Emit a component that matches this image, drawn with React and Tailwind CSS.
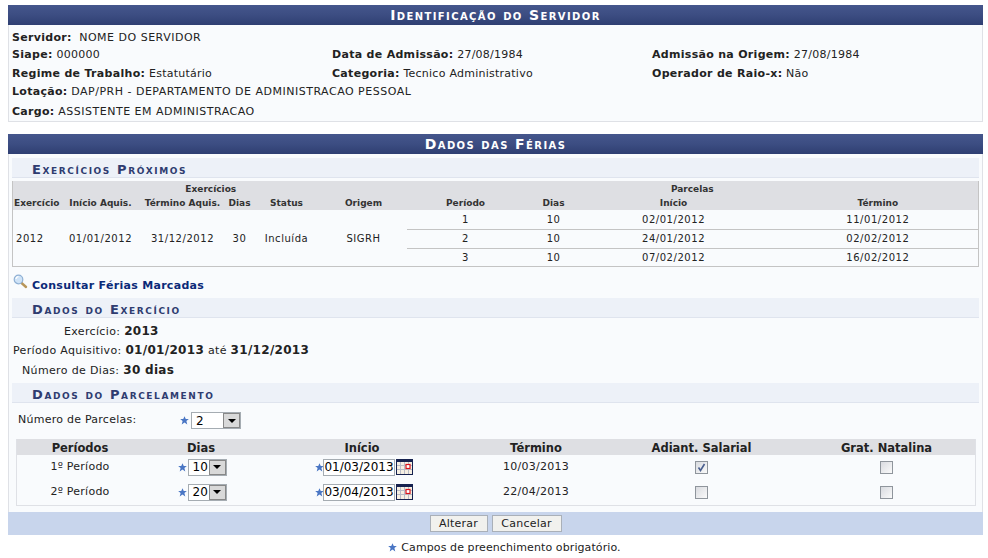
// App.jsx - Dados das Férias
import React from "react";

const exercicios = [
  { periodo: 1, dias: 10, inicio: "02/01/2012", termino: "11/01/2012" },
  { periodo: 2, dias: 10, inicio: "24/01/2012", termino: "02/02/2012" },
  { periodo: 3, dias: 10, inicio: "07/02/2012", termino: "16/02/2012" },
];

const Star = ({ className = "" }) => (
  <svg className={`w-[9px] h-[9px] shrink-0 ${className}`} viewBox="0 0 10 10">
    <path d="M5 0.3l1.4 3H9.8L7.1 5.5l1 3.9L5 7.3 1.9 9.4l1-3.9L0.2 3.3h3.4z" fill="#4a76c4" />
  </svg>
);

const Lens = () => (
  <svg className="w-[15px] h-[15px]" viewBox="0 0 15 15">
    <path d="M8 8.5l5 4.5" stroke="#b8965a" strokeWidth="2.4" strokeLinecap="round" />
    <circle cx="5.5" cy="5.5" r="4.3" fill="#cfe3f7" stroke="#8fb0d4" strokeWidth="1.2" />
    <path d="M3 5a2.5 2.5 0 0 1 2.5-2.3" stroke="#fff" strokeWidth="1.2" fill="none" />
  </svg>
);

const Calendar = () => (
  <svg className="w-[17px] h-[16px] shrink-0" viewBox="0 0 17 16">
    <rect x="0" y="0" width="17" height="16" fill="#16224f" />
    <rect x="1" y="3" width="15" height="12" fill="#f6efe2" />
    <path d="M4.5 3v12M8.5 3v12M12.5 3v12M1 6.5h15M1 10.5h15" stroke="#b9bcc6" strokeWidth="1" />
    <rect x="10" y="5.5" width="4" height="4" fill="#fff" stroke="#d8141c" strokeWidth="1.2" />
  </svg>
);

const Check = ({ checked }) => (
  <div className="w-[13px] h-[13px] border border-[#8f959c] bg-gradient-to-br from-[#d9dbe0] to-[#fafafa] flex items-center justify-center">
    {checked && (
      <svg className="w-[9px] h-[9px]" viewBox="0 0 9 9">
        <path d="M1.5 4.5l2 3 4-6.5" stroke="#4a5f8f" strokeWidth="1.6" fill="none" />
      </svg>
    )}
  </div>
);

const Select = ({ value, width }) => (
  <div className={`h-[17px] bg-white border border-[#a5acb2] flex items-center justify-between ${width}`}>
    <span className="pl-1 text-[12px] text-black leading-none tracking-normal">{value}</span>
    <span className="w-[17px] h-[15px] bg-[#d9d9d9] border border-[#888] flex items-center justify-center">
      <span className="w-0 h-0 border-l-[4px] border-r-[4px] border-t-[4px] border-l-transparent border-r-transparent border-t-black" />
    </span>
  </div>
);

const DateField = ({ value }) => (
  <div className="flex items-center justify-center pl-[4px]">
    <Star className="-mr-px" />
    <span className="w-[72px] h-[17px] bg-white border border-[#a5acb2] text-[12px] leading-[15px] text-center text-black tracking-normal">
      {value}
    </span>
    <span className="ml-[1px]">
      <Calendar />
    </span>
  </div>
);

const Bar = ({ children }) => (
  <div className="h-5 bg-gradient-to-b from-[#45568c] via-[#3c4d82] to-[#2f3f72] text-white text-center font-bold text-[14px] leading-5 tracking-[1.4px] [font-variant:small-caps]">
    {children}
  </div>
);

const Section = ({ children }) => (
  <div className="h-5 bg-[#edf1f8] border-b border-[#dfe4ee] pl-5 text-[#2f3c70] font-bold text-[13px] leading-[23px] tracking-[1.6px] [font-variant:small-caps]">
    {children}
  </div>
);

const Label = ({ children }) => <span className="font-bold text-[#222] tracking-[0.3px]">{children}</span>;

const Upper = ({ children }) => <span className="tracking-[0.5px]">{children}</span>;

const Strong = ({ children }) => <b className="text-[12px] tracking-[0.3px]">{children}</b>;

export default function App() {
  return (
    <div className="w-[988px] h-[558px] bg-white pt-[5px] px-2 overflow-hidden text-[11px] tracking-[0.25px] text-[#222] font-['DejaVu_Sans','Verdana',sans-serif]">
      <div className="w-[975px]">
        <Bar>Identificação do Servidor</Bar>
        <div className="h-[97px] bg-[#f9fbfd] border-x border-b border-[#dfe1e6] pl-[3px] pt-1 leading-[18.4px]">
          <div className="h-[17px]">
            <Label>Servidor:</Label> &nbsp;<Upper>NOME DO SERVIDOR</Upper>
          </div>
          <div className="grid grid-cols-[320px_320px_1fr] auto-rows-[19px]">
            <div><Label>Siape:</Label> 000000</div>
            <div><Label>Data de Admissão:</Label> 27/08/1984</div>
            <div><Label>Admissão na Origem:</Label> 27/08/1984</div>
            <div><Label>Regime de Trabalho:</Label> Estatutário</div>
            <div><Label>Categoria:</Label> Tecnico Administrativo</div>
            <div><Label>Operador de Raio-x:</Label> Não</div>
          </div>
          <div className="-mt-px"><Label>Lotação:</Label> <Upper>DAP/PRH - DEPARTAMENTO DE ADMINISTRACAO PESSOAL</Upper></div>
          <div className="mt-[2px]"><Label>Cargo:</Label> <Upper>ASSISTENTE EM ADMINISTRACAO</Upper></div>
        </div>

        <div className="mt-3">
          <Bar>Dados das Férias</Bar>
          <div className="h-[358px] bg-[#f9fbfd] border-x border-[#dfe1e6] px-[3px] pt-[4px]">
            <Section>Exercícios Próximos</Section>
            <table className="w-[966px] table-fixed border-collapse border-b border-x border-[#c4c4c4] mt-[3px] text-[10px]">
              <colgroup>
                <col className="w-[50px]" />
                <col className="w-[76px]" />
                <col className="w-[88px]" />
                <col className="w-[26px]" />
                <col className="w-[68px]" />
                <col className="w-[86px]" />
                <col className="w-[118px]" />
                <col className="w-[58px]" />
                <col className="w-[182px]" />
                <col className="w-[214px]" />
              </colgroup>
              <thead className="bg-[#dedfe3] text-[9px] leading-[14px] whitespace-nowrap tracking-normal text-[#333]">
                <tr className="h-[15px]">
                  <th colSpan={6} className="text-center font-bold pl-[2px] pt-px">Exercícios</th>
                  <th colSpan={4} className="text-center font-bold pt-px">Parcelas</th>
                </tr>
                <tr className="h-[14px]">
                  <th className="font-bold pr-[2px]">Exercício</th>
                  <th className="font-bold">Início Aquis.</th>
                  <th className="font-bold">Término Aquis.</th>
                  <th className="font-bold">Dias</th>
                  <th className="font-bold">Status</th>
                  <th className="font-bold">Origem</th>
                  <th className="font-bold">Período</th>
                  <th className="font-bold">Dias</th>
                  <th className="font-bold">Início</th>
                  <th className="font-bold pl-[13px]">Término</th>
                </tr>
              </thead>
              <tbody className="text-center text-[#222] tracking-[0.55px]">
                {exercicios.map((row, i) => (
                  <tr key={row.periodo} className={i < 2 ? "h-[19px]" : "h-[18px]"}>
                    {i === 0 && (
                      <>
                        <td rowSpan={3} className="text-left pl-[3px] pt-[2px]">2012</td>
                        <td rowSpan={3} className="pt-[2px]">01/01/2012</td>
                        <td rowSpan={3} className="pt-[2px]">31/12/2012</td>
                        <td rowSpan={3} className="pt-[2px]">30</td>
                        <td rowSpan={3} className="pt-[2px]">Incluída</td>
                        <td rowSpan={3} className="pt-[2px]">SIGRH</td>
                      </>
                    )}
                    <td className={i < 2 ? "border-b border-[#c4c4c4]" : ""}>{row.periodo}</td>
                    <td className={i < 2 ? "border-b border-[#c4c4c4]" : ""}>{row.dias}</td>
                    <td className={i < 2 ? "border-b border-[#c4c4c4]" : ""}>{row.inicio}</td>
                    <td className={`pl-[13px] ${i < 2 ? "border-b border-[#c4c4c4]" : ""}`}>{row.termino}</td>
                  </tr>
                ))}
              </tbody>
            </table>

            <div className="flex items-start h-[31px] pt-[7px] pl-px">
              <Lens />
              <a className="ml-[4px] mt-[5px] text-[#0b2a78] font-bold text-[11px] leading-[14px] tracking-[0.3px]">Consultar Férias Marcadas</a>
            </div>

            <Section>Dados do Exercício</Section>
            <div className="leading-[19.5px] pt-[4px] h-[65px] tracking-[0.35px]">
              <div className="pl-[52px]">Exercício: <Strong>2013</Strong></div>
              <div className="pl-px">
                Período Aquisitivo: <Strong>01/01/2013</Strong> até <Strong>31/12/2013</Strong>
              </div>
              <div className="pl-[10px]">Número de Dias: <Strong>30 dias</Strong></div>
            </div>

            <Section>Dados do Parcelamento</Section>
            <div className="flex items-center h-[26px] mt-[5px] pl-[6px]">
              <span className="w-[162px]">Número de Parcelas:</span>
              <Star />
              <span className="ml-[2px]">
                <Select value="2" width="w-[50px]" />
              </span>
            </div>

            <div className="ml-[4px] mt-[5px] w-[960px] border border-t-0 border-[#dfe1e6]">
              <div className="grid grid-cols-[126px_116px_206px_142px_189px_181px] h-4 bg-[#dedfe3] font-bold text-[11.5px] leading-[18px] text-center text-[#222] tracking-normal">
                <div>Períodos</div>
                <div>Dias</div>
                <div>Início</div>
                <div>Término</div>
                <div>Adiant. Salarial</div>
                <div>Grat. Natalina</div>
              </div>
              {[
                { nome: "1º Período", dias: "10", inicio: "01/03/2013", termino: "10/03/2013", adiant: true },
                { nome: "2º Período", dias: "20", inicio: "03/04/2013", termino: "22/04/2013", adiant: false },
              ].map((p) => (
                <div key={p.nome} className="grid grid-cols-[126px_116px_206px_142px_189px_181px] h-[25px] items-center text-center">
                  <div className="pt-px">{p.nome}</div>
                  <div className="flex items-center justify-center pl-[2px]">
                    <Star />
                    <span className="ml-[1px]">
                      <Select value={p.dias} width="w-[39px]" />
                    </span>
                  </div>
                  <DateField value={p.inicio} />
                  <div className="pt-px">{p.termino}</div>
                  <div className="flex justify-center"><Check checked={p.adiant} /></div>
                  <div className="flex justify-center"><Check checked={false} /></div>
                </div>
              ))}
            </div>
          </div>
        </div>

        <div className="h-[23px] bg-[#c8d5ec] flex items-center justify-center gap-[4px]">
          <button className="h-[17px] w-[58px] bg-[#f1f1ee] border border-[#aab0b8] text-[11px] leading-none text-[#222]">Alterar</button>
          <button className="h-[17px] w-[70px] bg-[#f1f1ee] border border-[#aab0b8] text-[11px] leading-none text-[#222]">Cancelar</button>
        </div>

        <div className="flex items-center justify-center mt-[6px] pl-[18px] text-[11px] tracking-[0.1px] leading-[13px] gap-[4px] text-[#222]">
          <Star />
          <span>Campos de preenchimento obrigatório.</span>
        </div>
      </div>
    </div>
  );
}
